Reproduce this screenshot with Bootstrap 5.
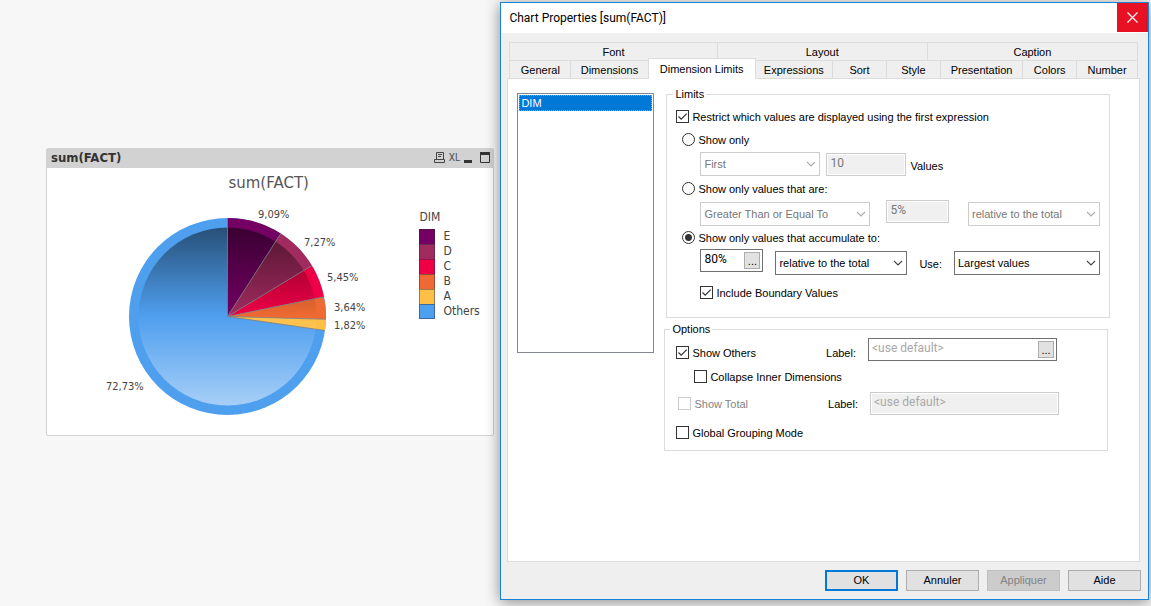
<!DOCTYPE html>
<html lang="en">
<head>
<meta charset="utf-8">
<meta name="viewport" content="width=device-width, initial-scale=1">
<title>Chart Properties</title>
<link href="https://cdn.jsdelivr.net/npm/bootstrap@5.3.0/dist/css/bootstrap.min.css" rel="stylesheet">
<style>
  :root { --line: #dcdcdc; --face: #efefef; --accent: #0078d7; }
  body { background: #f7f7f7; font: 11px/14px "Liberation Sans", Arial, sans-serif; color: #000; }
  .desk { display: grid; grid-template-columns: 125fr 162fr; min-height: 100vh; padding: 2px 2px 6px 0; overflow: hidden; }

  /* chart object */
  .chart-box { margin: 146px 6px 0 46px; background: #fff; border: 1px solid #d2d2d2; border-radius: 2px; font-family: "DejaVu Sans Condensed", "DejaVu Sans", sans-serif; color: #444; }
  .chart-head { background: #d2d2d2; height: 19px; padding: 0 3px 2px 4px; }
  .chart-head h1 { font-size: 13px; line-height: 16px; font-weight: 700; color: #333; }
  .chart-head button { background: none; color: #555; line-height: 14px; }
  .xl { font: 10px/14px Roboto, "Liberation Sans", sans-serif; }
  .chart-title { font-family: "DejaVu Sans", sans-serif; font-size: 15px; line-height: 30px; color: #555; padding-right: 3px; }
  .pie { width: 330px; height: 237px; }
  .pie text { font-size: 11px; fill: #444; }
  .legend-box { font-size: 12px; line-height: 15px; padding-top: 12px; width: 74px; }
  .swatch { width: 16px; height: 15px; border: 1px solid rgba(40,40,70,.45); border-bottom-width: 0; margin-right: 8px; }
  li:last-child > .swatch { border-bottom-width: 1px; }

  /* dialog */
  .dialog-win { background: var(--face); border: 1px solid #1883d7; box-shadow: 0 2px 14px rgba(0,0,0,.45); }
  .title-row { background: #fff; height: 30px; padding-left: 8px; font-family: Roboto, "Open Sans", sans-serif; }
  .title-row h2 { font-size: 12px; line-height: 30px; }
  .close-btn { width: 31px; height: 29px; background: #e81123; }
  .tab-area { padding: 9px 10px 0 8px; }
  .tab-line { border-left: 1px solid var(--line); }
  .tab-line button { background: var(--face); border: solid var(--line); border-width: 1px 1px 0 0; height: 18px; line-height: 18px; min-width: 0; white-space: nowrap; }
  .g54 { flex: 54 1 0; } .g61 { flex: 61 1 0; } .g78 { flex: 78 1 0; } .g83 { flex: 83 1 0; } .g108 { flex: 108 1 0; }
  .g207 { flex: 207 1 0; } .g210 { flex: 210 1 0; }
  .tab-line .current { background: #fff; height: 21px; line-height: 18px; margin: -2px 0 -1px -1px; border-width: 1px; border-bottom: 0; z-index: 1; position: relative; }
  .sheet { background: #fff; border: 1px solid var(--line); margin: 0 8px 0 6px; padding: 14px 29px 14px 9px; }
  .pick-list { width: 137px; height: 260px; border: 1px solid #828790; padding: 1px; }
  .pick-list button { background: var(--accent); color: #fff; line-height: 14px; height: 16px; padding: 0 2px; outline: 1px dotted #ff8728; outline-offset: -1px; }

  fieldset.frame { border: 1px solid var(--line); padding: 4px 9px 3px; }
  .frame > legend { float: none; width: auto; font-size: 11px; line-height: 14px; margin: 0 0 0 -3px; padding: 0 2px; }
  .limits { margin-top: -6px; }
  fieldset.opts { margin: 4px 2px 0 -2px; padding: 2px 9px 6px 11px; }
  .opts > legend { margin-left: -6px; }
  .opt { height: 23px; gap: 3px; }
  .opt-radio { padding-left: 6px; }
  .fields { height: 26px; padding-left: 24px; }
  .gap-s { margin-left: 6px; } .gap-l { margin-left: 12px; } .gap-r { margin-right: 12px; }
  .lab-row { height: 26px; padding-right: 41px; }
  .lab-row.total { height: 23px; padding: 0 39px 0 2px; margin: 4px 0 6px; }
  .opt-sub { padding-left: 18px; margin-top: 1px; }
  .opt-last { padding-left: 24px; margin: 6px 0 10px; }
  .opt input { appearance: none; width: 13px; height: 13px; border: 1px solid #333; background: #fff; margin: 0; }
  .opt input[type=radio] { border-radius: 50%; }
  .opt input[type=radio]:checked { background: radial-gradient(circle, #333 3px, #fff 4px); }
  .opt input[type=checkbox]:checked { background: url("data:image/svg+xml,%3Csvg xmlns='http://www.w3.org/2000/svg' viewBox='0 0 11 11'%3E%3Cpath d='M1.5 5.5 4.2 8.2 9.7 2.7' fill='none' stroke='%23333' stroke-width='1.2'/%3E%3C/svg%3E"); }
  .opt input:disabled { border-color: #ccc; }
  .opt input:disabled + label { color: #838383; }

  .drop { appearance: none; height: 24px; border: 1px solid #707070; border-radius: 0; padding: 0 18px 0 3px; color: #000; background: #fff url("data:image/svg+xml,%3Csvg xmlns='http://www.w3.org/2000/svg' width='10' height='6'%3E%3Cpath d='M1 1 5 5 9 1' fill='none' stroke='%23444' stroke-width='1.1'/%3E%3C/svg%3E") no-repeat right 3px center; }
  .drop:disabled { border-color: #ccc; color: #777; opacity: 1; background-image: url("data:image/svg+xml,%3Csvg xmlns='http://www.w3.org/2000/svg' width='10' height='6'%3E%3Cpath d='M1 1 5 5 9 1' fill='none' stroke='%23aaa' stroke-width='1.1'/%3E%3C/svg%3E"); }
  .entry { height: 23px; border: 1px solid #707070; background: #fff; padding: 1px; }
  .entry input { border: 0; padding: 0 2px 3px; font-family: Roboto, "Liberation Sans", sans-serif; font-size: 12px; line-height: 16px; min-width: 0; background: transparent; color: #000; }
  .entry input::placeholder { color: #a9a9a9; }
  .entry.off { border-color: #ccc; }
  .entry.off input { background: #f0f0f0; color: #777; }
  .entry button { width: 16px; height: 17px; margin: 1px; background: #e1e1e1; border: 1px solid #adadad; line-height: 14px; flex: none; }
  .w63 { width: 63px; } .w80 { width: 80px; } .w120 { width: 120px; } .w132 { width: 132px; } .w146 { width: 146px; } .w170 { width: 170px; } .w189 { width: 189px; }

  .foot { padding: 8px 7px 8px 0; gap: 8px; }
  .foot button { width: 73px; height: 21px; background: #e1e1e1; border: 1px solid #adadad; line-height: 19px; }
  .foot .main-act { border: 2px solid var(--accent); line-height: 17px; }
  .foot button:disabled { background: #ccc; border-color: #bfbfbf; color: #838383; }
</style>
</head>
<body>
<div class="desk">
  <main>
    <section class="chart-box">
      <header class="chart-head d-flex align-items-center">
        <h1 class="m-0 me-auto">sum(FACT)</h1>
        <button class="border-0 p-0 d-flex" aria-label="Print"><svg width="11" height="11" viewBox="0 0 11 11" fill="none" stroke="#444"><path d="M2.500 7V.5h7V7M4 2.500h4M4 4.500h3M.5 7.500h10v3H.5z"/></svg></button>
        <button class="xl border-0 p-0 mx-1">XL</button>
        <button class="border-0 p-0 d-flex" aria-label="Minimize"><svg width="8" height="11"><path d="M0 8h8v3H0z" fill="#333"/></svg></button>
        <button class="border-0 p-0 ms-2 d-flex" aria-label="Maximize"><svg width="10" height="11"><path d="M.5 1v9.500h9V1" fill="none" stroke="#333"/><path d="M0 0h10v3H0z" fill="#333"/></svg></button>
      </header>
      <div class="chart-title text-center">sum(FACT)</div>
      <div class="d-flex justify-content-between">
        <svg class="pie flex-shrink-1" viewBox="47 198 330 237" role="img" aria-label="Pie chart of sum(FACT) by DIM">
          <defs><linearGradient id="shade" x1="0" y1="0" x2="0" y2="1"><stop offset="0" stop-color="#000" stop-opacity=".5"/><stop offset=".5" stop-color="#000" stop-opacity="0"/><stop offset=".5" stop-color="#fff" stop-opacity="0"/><stop offset="1" stop-color="#fff" stop-opacity=".5"/></linearGradient></defs>
          <circle cx="227.500" cy="316.500" r="98.500" fill="#4f9fef"/>
          <path fill="#740063" d="M227.500 316.500V218A98.500 98.500 0 0 1 280.800 233.600z"/>
          <path fill="#a12a5e" d="M227.500 316.500 280.800 233.600A98.500 98.500 0 0 1 311.900 265.600z"/>
          <path fill="#ef0046" d="M227.500 316.500 311.900 265.600A98.500 98.500 0 0 1 324 296.900z"/>
          <path fill="#ef6a32" d="M227.500 316.500 324 296.900A98.500 98.500 0 0 1 326 319.300z"/>
          <path fill="#fdbf48" d="M227.500 316.500 326 319.300A98.500 98.500 0 0 1 325 330.500z"/>
          <circle cx="227.500" cy="316.500" r="89" fill="url(#shade)"/>
          <path d="M227.500 218v98.500L280.800 233.600M227.500 316.500 311.900 265.600M227.500 316.500 324 296.900M227.500 316.500 326 319.300M227.500 316.500 325 330.500" fill="none" stroke="#808080" stroke-opacity=".8"/>
          <text x="258" y="218">9,09%</text><text x="304" y="246">7,27%</text><text x="327" y="281">5,45%</text><text x="334" y="311">3,64%</text><text x="334" y="329">1,82%</text><text x="106" y="390">72,73%</text>
        </svg>
        <div class="legend-box flex-shrink-0">
          <div class="mb-1">DIM</div>
          <ul class="list-unstyled m-0">
            <li class="d-flex"><span class="swatch" style="background:#740063"></span>E</li>
            <li class="d-flex"><span class="swatch" style="background:#a12a5e"></span>D</li>
            <li class="d-flex"><span class="swatch" style="background:#ef0046"></span>C</li>
            <li class="d-flex"><span class="swatch" style="background:#ef6a32"></span>B</li>
            <li class="d-flex"><span class="swatch" style="background:#fdbf48"></span>A</li>
            <li class="d-flex"><span class="swatch" style="background:#4f9fef"></span>Others</li>
          </ul>
        </div>
      </div>
    </section>
  </main>

  <section class="dialog-win d-flex flex-column" role="dialog" aria-labelledby="dlgTitle">
    <header class="title-row d-flex justify-content-between">
      <h2 class="m-0 fw-normal" id="dlgTitle">Chart Properties [sum(FACT)]</h2>
      <button class="close-btn border-0 p-0 d-flex align-items-center justify-content-center" aria-label="Close"><svg width="11" height="11" viewBox="0 0 11 11"><path d="M.5.5l10 10M10.500.5l-10 10" stroke="#fff" stroke-width="1.200"/></svg></button>
    </header>
    <nav class="tab-area">
      <div class="tab-line d-flex">
        <button class="g207 p-0">Font</button><button class="g210 p-0">Layout</button><button class="g210 p-0">Caption</button>
      </div>
      <div class="tab-line d-flex">
        <button class="g61 p-0">General</button><button class="g78 p-0">Dimensions</button><button class="g108 p-0 current">Dimension Limits</button><button class="g78 p-0">Expressions</button><button class="g54 p-0">Sort</button><button class="g54 p-0">Style</button><button class="g83 p-0">Presentation</button><button class="g54 p-0">Colors</button><button class="g61 p-0">Number</button>
      </div>
    </nav>
    <div class="sheet flex-grow-1 d-flex align-items-start">
      <div class="pick-list flex-shrink-0"><button class="d-block w-100 border-0 text-start">DIM</button></div>
      <div class="flex-grow-1 ms-2 ps-1">
        <fieldset class="frame limits">
          <legend>Limits</legend>
          <div class="opt d-flex align-items-center"><input type="checkbox" id="restrict" checked><label for="restrict">Restrict which values are displayed using the first expression</label></div>
          <div class="opt opt-radio d-flex align-items-center"><input type="radio" name="mode" id="m1"><label for="m1">Show only</label></div>
          <div class="fields d-flex align-items-center">
            <select class="drop w120" aria-label="Which values" disabled><option>First</option></select>
            <span class="entry off w80 d-flex gap-s"><input class="w-100" id="cnt" value="10" disabled></span>
            <label class="ms-1 mt-1" for="cnt">Values</label>
          </div>
          <div class="opt opt-radio d-flex align-items-center"><input type="radio" name="mode" id="m2"><label for="m2">Show only values that are:</label></div>
          <div class="fields d-flex align-items-end">
            <select class="drop w170" aria-label="Comparison" disabled><option>Greater Than or Equal To</option></select>
            <span class="entry off w63 d-flex align-self-start ms-3"><input class="w-100" value="5%" aria-label="Threshold" disabled></span>
            <select class="drop w132 ms-auto" aria-label="Threshold basis" disabled><option>relative to the total</option></select>
          </div>
          <div class="opt opt-radio d-flex align-items-center"><input type="radio" name="mode" id="m3" checked><label for="m3">Show only values that accumulate to:</label></div>
          <div class="fields d-flex align-items-end">
            <span class="entry w63 d-flex align-self-start"><input class="w-100" value="80%" aria-label="Accumulated share"><button class="p-0">...</button></span>
            <select class="drop w132 gap-l me-auto" aria-label="Share basis"><option>relative to the total</option></select>
            <label class="gap-r mb-1" for="use">Use:</label>
            <select class="drop w146" id="use"><option>Largest values</option></select>
          </div>
          <div class="opt opt-last d-flex align-items-center"><input type="checkbox" id="bound" checked><label for="bound">Include Boundary Values</label></div>
        </fieldset>

        <fieldset class="frame opts">
          <legend>Options</legend>
          <div class="lab-row d-flex align-items-end">
            <div class="opt d-flex align-items-center me-auto"><input type="checkbox" id="others" checked><label for="others">Show Others</label></div>
            <label class="gap-r mb-1" for="lab1">Label:</label>
            <span class="entry w189 d-flex align-self-start"><input class="w-100" id="lab1" placeholder="&lt;use default&gt;"><button class="p-0">...</button></span>
          </div>
          <div class="opt opt-sub d-flex align-items-center"><input type="checkbox" id="collapse"><label for="collapse">Collapse Inner Dimensions</label></div>
          <div class="lab-row total d-flex align-items-center">
            <div class="opt d-flex align-items-center me-auto"><input type="checkbox" id="total" disabled><label for="total">Show Total</label></div>
            <label class="gap-r" for="lab2">Label:</label>
            <span class="entry off w189 d-flex"><input class="w-100" id="lab2" placeholder="&lt;use default&gt;" disabled></span>
          </div>
          <div class="opt d-flex align-items-center"><input type="checkbox" id="global"><label for="global">Global Grouping Mode</label></div>
        </fieldset>
      </div>
    </div>
    <footer class="foot d-flex justify-content-end">
      <button class="main-act p-0">OK</button><button class="p-0">Annuler</button><button class="p-0" disabled>Appliquer</button><button class="p-0">Aide</button>
    </footer>
  </section>
</div>
<script src="https://cdn.jsdelivr.net/npm/bootstrap@5.3.0/dist/js/bootstrap.bundle.min.js"></script>
</body>
</html>
